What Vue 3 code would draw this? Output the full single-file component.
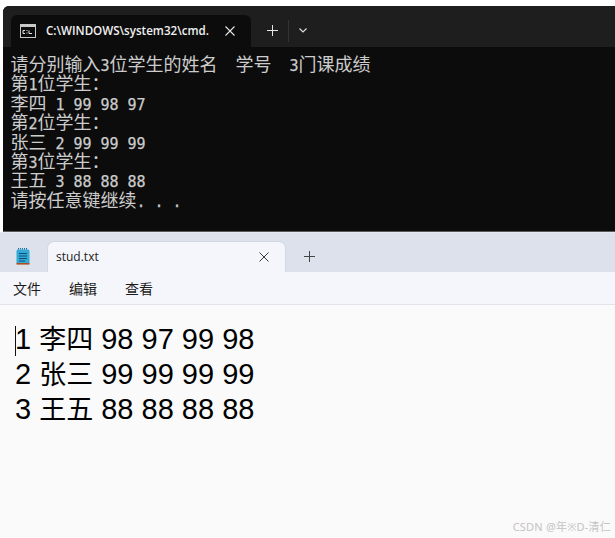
<script setup>
const consoleLines = [
  '请分别输入3位学生的姓名  学号  3门课成绩',
  '第1位学生：',
  '李四 1 99 98 97',
  '第2位学生：',
  '张三 2 99 99 99',
  '第3位学生：',
  '王五 3 88 88 88',
  '请按任意键继续. . .',
]
const segments = (line) =>
  line.match(/[\x20-\x7e]+|[^\x20-\x7e]+/g).map((text) => ({
    text,
    latin: /^[\x20-\x7e]/.test(text),
  }))
const fileLines = ['1 李四 98 97 99 98', '2 张三 99 99 99 99', '3 王五 88 88 88 88']
</script>

<template>
  <div class="page">
    <section class="terminal">
      <header class="term-bar">
        <div class="term-tab">
          <svg class="cmd-icon" width="16" height="14" viewBox="0 0 16 14">
            <rect x="0.5" y="0.5" width="15" height="13" fill="#0c0c0c" stroke="#c8c8c8" />
            <rect x="1" y="1" width="14" height="2" fill="#c8c8c8" />
            <path d="M3 6.5H5M3 6.5V9.5H5M7 8.5V9.5M7 6V7M9 6.5V9.5H12" fill="none" stroke="#e4e4e4" stroke-width="1" />
          </svg>
          <span class="term-title">C:\WINDOWS\system32\cmd.</span>
          <svg class="term-close" width="10" height="10" viewBox="0 0 10 10">
            <path d="M0.5 0.5L9.5 9.5M9.5 0.5L0.5 9.5" stroke="#e6e6e6" stroke-width="1.1" fill="none" />
          </svg>
        </div>
        <svg class="term-plus" width="11" height="11" viewBox="0 0 11 11">
          <path d="M5.5 0V11M0 5.5H11" stroke="#e6e6e6" stroke-width="1" fill="none" />
        </svg>
        <span class="term-sep"></span>
        <svg class="term-chevron" width="8" height="5" viewBox="0 0 8 5">
          <path d="M0.5 0.5L4 4L7.5 0.5" stroke="#e0e0e0" stroke-width="1.1" fill="none" />
        </svg>
      </header>
      <div class="term-body">
        <div v-for="(line, i) in consoleLines" :key="i" class="term-line">
          <span v-for="(seg, j) in segments(line)" :key="j" :class="seg.latin ? 'latin' : 'cjk'">{{ seg.text }}</span>
        </div>
      </div>
    </section>

    <section class="notepad">
      <header class="note-bar">
        <svg class="note-icon" width="14" height="17" viewBox="0 0 14 17">
          <rect x="0.5" y="1.5" width="13" height="14.5" rx="1.5" fill="#35a9d6" />
          <rect x="0.5" y="15" width="13" height="1.6" fill="#a9521f" />
          <path d="M2 0.8H12" stroke="#1d6f9a" stroke-width="1.6" stroke-dasharray="1 1" />
          <path d="M3 5.5H11M3 8H11M3 10.5H11M3 13H9" stroke="#0d4e74" stroke-width="1" />
        </svg>
        <div class="note-tab">
          <span class="note-title">stud.txt</span>
          <svg width="10" height="10" viewBox="0 0 10 10">
            <path d="M0.5 0.5L9.5 9.5M9.5 0.5L0.5 9.5" stroke="#3a3a3a" stroke-width="1" fill="none" />
          </svg>
        </div>
        <svg class="note-plus" width="11" height="11" viewBox="0 0 11 11">
          <path d="M5.5 0V11M0 5.5H11" stroke="#444" stroke-width="1" fill="none" />
        </svg>
      </header>
      <nav class="menu">
        <span>文件</span>
        <span>编辑</span>
        <span>查看</span>
      </nav>
      <main class="editor">
        <span class="caret"></span>
        <div v-for="line in fileLines" :key="line" class="file-line">
          <span v-for="(seg, j) in segments(line)" :key="j" :class="seg.latin ? 'file-latin' : 'file-cjk'">{{ seg.text }}</span>
        </div>
        <div class="watermark">CSDN @年※D-清仁</div>
      </main>
    </section>
  </div>
</template>

<style scoped>
.page {
  width: 615px;
  height: 538px;
  display: flex;
  flex-direction: column;
  overflow: hidden;
  background: #fff;
  padding-top: 6px;
  box-sizing: border-box;
}
.terminal {
  margin-left: 3px;
  height: 226px;
  background: #0c0c0c;
  border-radius: 6px 0 0 0;
  border-bottom: 1px solid #5a5a5a;
  box-sizing: border-box;
  flex: none;
}
.term-bar {
  height: 41px;
  background: #1e1e1e;
  border-radius: 6px 0 0 0;
  display: flex;
  align-items: flex-start;
}
.term-tab {
  margin-left: 8px;
  margin-top: 9px;
  width: 240px;
  height: 32px;
  background: #0c0c0c;
  border-radius: 6px 6px 0 0;
  display: flex;
  align-items: center;
  box-sizing: border-box;
  padding-left: 9px;
  color: #f0f0f0;
}
.cmd-icon {
  flex: none;
}
.term-title {
  margin-left: 10px;
  font: 600 11.6px/16px "Open Sans", "Noto Sans", sans-serif;
  white-space: nowrap;
  width: 165px;
  flex: none;
}
.term-close {
  margin-left: 14px;
  flex: none;
}
.term-plus {
  margin-left: 16px;
  margin-top: 19px;
}
.term-sep {
  width: 1px;
  height: 22px;
  margin-left: 10px;
  margin-top: 14px;
  background: #333;
}
.term-chevron {
  margin-left: 10px;
  margin-top: 22px;
}
.term-body {
  padding: 7px 0 0 7.5px;
  color: #cccccc;
}
.term-line {
  height: 19.4px;
  line-height: 19.4px;
  white-space: pre;
}
.cjk,
.latin {
  display: inline-block;
  line-height: 19.4px;
  vertical-align: baseline;
}
.cjk {
  font-family: "Noto Sans CJK SC", sans-serif;
  font-size: 18px;
}
.latin {
  font-family: "DejaVu Sans Mono", monospace;
  font-size: 15px;
  letter-spacing: -0.03px;
  -webkit-text-stroke: 0.25px #cccccc;
}
.notepad {
  flex: 1;
  display: flex;
  flex-direction: column;
  min-height: 0;
}
.note-bar {
  height: 40px;
  background: #dde1ec;
  display: flex;
  align-items: flex-end;
  flex: none;
  box-sizing: border-box;
  border-top: 1px solid #e6e8f0;
}
.note-icon {
  margin-left: 16px;
  margin-bottom: 7px;
  flex: none;
}
.note-tab {
  margin-left: 17px;
  width: 239px;
  height: 31px;
  background: #f5f6fb;
  border: 1px solid #d3d7e4;
  border-bottom: 0;
  border-radius: 7px 7px 0 0;
  box-sizing: border-box;
  display: flex;
  align-items: center;
  padding: 0 16px 0 8px;
  justify-content: space-between;
}
.note-title {
  font: 500 12px/16px "Open Sans", "Noto Sans", sans-serif;
  color: #1c1c1c;
}
.note-plus {
  margin-left: 18px;
  margin-bottom: 10px;
}
.menu {
  height: 33px;
  background: #f5f6fb;
  border-bottom: 1px solid #e3e4ea;
  display: flex;
  align-items: center;
  gap: 28px;
  padding-left: 13px;
  box-sizing: border-box;
  flex: none;
  font: 14px/18px "Noto Sans CJK SC", sans-serif;
  color: #1c1c1c;
}
.editor {
  flex: 1;
  position: relative;
  background: #fafafa;
  padding: 15px 0 0 15px;
  color: #000;
}
.file-line {
  height: 35px;
  line-height: 35px;
  white-space: pre;
}
.file-latin,
.file-cjk {
  display: inline-block;
  line-height: 35px;
}
.file-latin {
  font: 29px/35px "Liberation Sans", sans-serif;
}
.file-cjk {
  font: 27px/35px "Noto Sans CJK SC", sans-serif;
}
.caret {
  position: absolute;
  left: 15px;
  top: 21px;
  width: 1px;
  height: 30px;
  background: #111;
}
.watermark {
  position: absolute;
  right: 4px;
  bottom: 4px;
  font: 11px/14px "Noto Sans", "Noto Sans CJK SC", sans-serif;
  letter-spacing: 0.2px;
  color: #c4c4c4;
}
</style>
